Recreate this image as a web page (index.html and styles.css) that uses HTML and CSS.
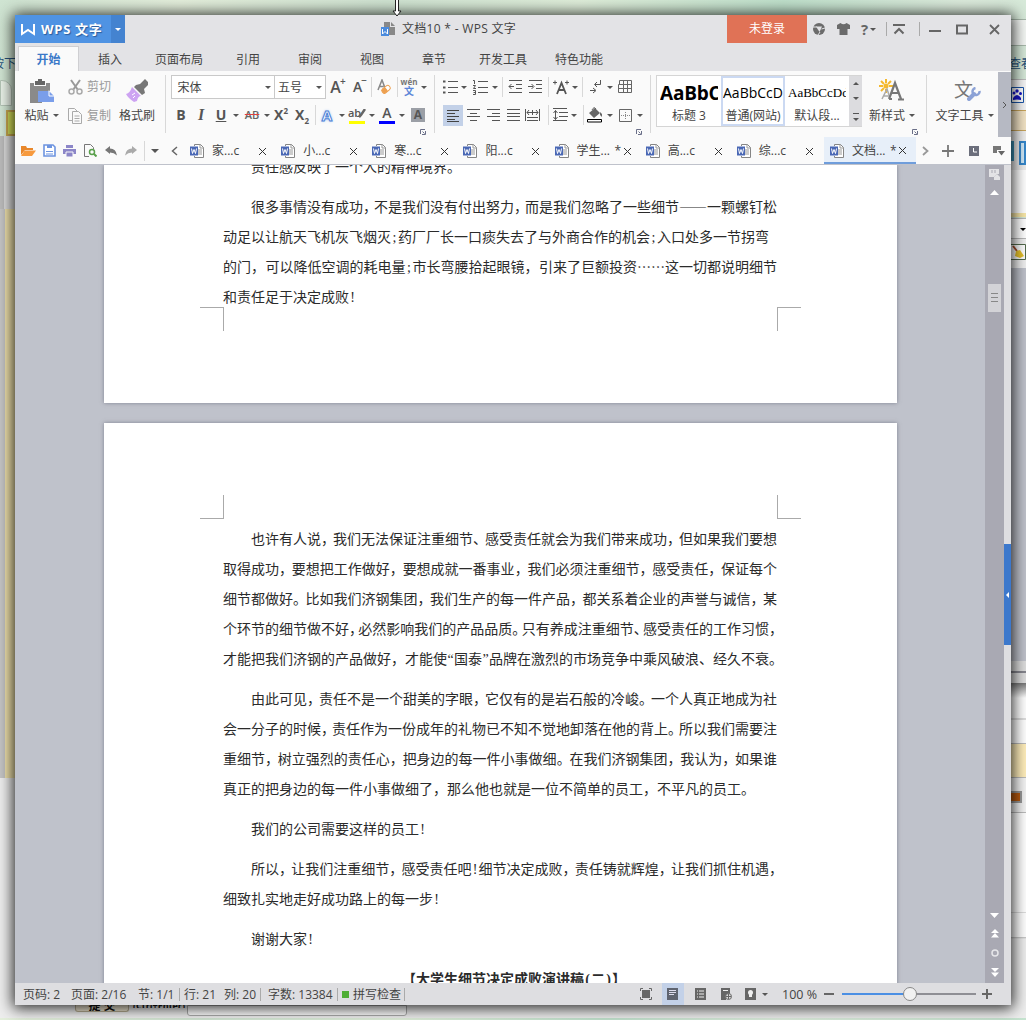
FILE: index.html
```html
<!DOCTYPE html>
<html lang="zh-CN">
<head>
    <meta charset="UTF-8">
    <title>文档10 * - WPS 文字</title>
    <link rel="stylesheet" href="styles.css">
</head>
<body>
    <svg class="symbols">
        <symbol id="doc" viewBox="0 0 16 16">
            <path d="M5.5 3V1.500h6l3 3v10h-9V13" fill="#fff" stroke="#858585"/>
            <path d="M11 1v4h4M9 7h4M9 9h4M9 11h4" fill="none" stroke="#999"/>
            <path d="M1 3.500h8v9H1z" fill="#4a68b5"/>
            <path d="M2.500 5.500l1 5 1.500-4 1.500 4 1-5" fill="none" stroke="#fff"/>
        </symbol>
        <symbol id="close" viewBox="0 0 9 9"><path d="M1 1l7 7M8 1L1 8" stroke="#333" fill="none"/></symbol>
        <symbol id="launch" viewBox="0 0 6 6"><path d="M.5 5V.5H5M5.500 2v3.500H2M2.500 2.500l2 2" stroke="#6a6f88" fill="none"/></symbol>
    </svg>

    <!-- windows behind -->
    <div class="desktop">
        <div class="strip left">
            <div class="l-top"></div>
            <div class="l-label">按下</div>
            <div class="l-tab"></div>
            <div class="l-icon"></div>
            <div class="l-list"></div>
            <div class="l-yellow"></div>
            <div class="l-end"></div>
        </div>
        <div class="strip right">
            <div class="r-top"></div>
            <div class="r-bar"></div>
            <div class="r-label">查看</div>
            <div class="r-paw">
                <svg width="13" height="16" viewBox="0 0 13 16"><path d="M.5.5h12v15H.5z" fill="#fff" stroke="#1a55a8"/><path d="M2 11q4-6 8 0v2q-4-1-8 0z" fill="#1515c8"/><circle cx="3" cy="6" r="1.500" fill="#1515c8"/><circle cx="6" cy="4" r="1.700" fill="#1515c8"/><circle cx="9.500" cy="6.500" r="1.500" fill="#1515c8"/></svg>
            </div>
            <div class="r-beige"></div>
            <div class="r-pics"><i class="r-lock"></i><i class="r-pic"></i></div>
            <div class="r-white"></div>
            <div class="r-combo"><i class="caret black"></i></div>
            <div class="r-broom">
                <svg width="15" height="16" viewBox="0 0 15 16"><path d="M0 .5h14.500v15H0" fill="#fff" stroke="#536b4c"/><path d="M2 2l4 5" stroke="#a64a28" stroke-width="2"/><path d="M5 7l4-1 4 6-4 2-5-2z" fill="#e8c32c"/></svg>
            </div>
            <div class="r-gray"></div>
            <div class="r-status"></div>
            <div class="r-row1"></div>
            <div class="r-yellow"></div>
            <div class="r-photo"><i></i></div>
            <div class="r-rest"></div>
        </div>
        <div class="under">
            <span class="submit">提 交</span><span class="under-text">(Ctrl+Enter)</span><span class="under-field"></span>
        </div>
    </div>

    <svg class="cursor" width="10" height="17" viewBox="0 0 10 17"><path d="M3.500-1v12H1L5 16l4-5H6.500V-1z" fill="#fff" stroke="#222"/></svg>

    <div class="window">
        <div class="titlebar">
            <div class="brand">
                <svg width="15" height="13" viewBox="0 0 15 13"><path d="M1 1v10l6-4 6 4V1" fill="none" stroke="#fff" stroke-width="2"/></svg>
                <span>WPS 文字</span>
            </div>
            <div class="brand-menu"><i class="caret white"></i></div>
            <div class="title">
                <svg width="15" height="15" viewBox="0 0 15 15"><path d="M3 0h6v5h5v8H3z" fill="#888"/><path d="M10 0l4 4h-4z" fill="#888"/><path d="M0 5h8v9H0z" fill="#4a8bdd"/><path d="M1.500 7v5L4 9.500 6.500 12V7" fill="none" stroke="#fff"/></svg>
                <span>文档10 * - WPS 文字</span>
            </div>
            <div class="login">未登录</div>
            <div class="controls">
                <svg width="12" height="12" viewBox="0 0 12 12"><circle cx="6" cy="6" r="6" fill="#6b6b6b"/><path d="M3 3.500h6L6.500 9z" fill="#e3e3e6"/><path d="M0 4l4 0M12 5L8.500 6M5 12l2-3" stroke="#e3e3e6"/></svg>
                <svg width="13" height="12" viewBox="0 0 13 12"><path d="M3.500 0q3 2.500 6 0L13 2v4h-2.500v6h-8V6H0V2z" fill="#6b6b6b"/></svg>
                <span class="help">?<i class="caret"></i></span>
                <i class="bar"></i>
                <svg width="12" height="11" viewBox="0 0 12 11"><path d="M0 1h12M1.500 9.500L6 5l4.500 4.500" fill="none" stroke="#666" stroke-width="2"/></svg>
                <i class="bar"></i>
                <svg width="12" height="11" viewBox="0 0 12 11"><path d="M0 7h12" stroke="#666" stroke-width="2"/></svg>
                <svg width="12" height="11" viewBox="0 0 12 11"><path d="M1 1.500h10v8H1z" fill="none" stroke="#666" stroke-width="2"/></svg>
                <svg width="11" height="11" viewBox="0 0 11 11"><path d="M1 1l9 9M10 1l-9 9" stroke="#666" stroke-width="1.800"/></svg>
            </div>
        </div>

        <div class="menu">
            <span class="active">开始</span><span>插入</span><span class="wide">页面布局</span><span>引用</span><span>审阅</span><span>视图</span><span>章节</span><span class="wide">开发工具</span><span class="wide">特色功能</span>
        </div>

        <div class="ribbon">
            <div class="group clipboard">
                <div class="big">
                    <svg width="26" height="26" viewBox="0 0 26 26"><path d="M1 4h4v4h12V4h4v7h-8v13H1z" fill="#8a8a8a"/><path d="M1 7h20v5H1z" fill="#8a8a8a"/><path d="M6 2h3V0h4v2h3v4H6z" fill="#666"/><path d="M9 12h11l5 5v6H9z" fill="#7a9eea"/><path d="M20 11.500v5.500h5" fill="none" stroke="#fff"/></svg>
                    <span>粘贴<i class="caret"></i></span>
                </div>
                <div class="stack">
                    <div><svg width="15" height="17" viewBox="0 0 15 17"><path d="M3 1l7 10M12 1L5 11" stroke="#999" stroke-width="2"/><circle cx="3.500" cy="12.500" r="2.500" fill="none" stroke="#aaa" stroke-width="1.500"/><circle cx="11.500" cy="12.500" r="2.500" fill="none" stroke="#aaa" stroke-width="1.500"/></svg>剪切</div>
                    <div><svg width="15" height="16" viewBox="0 0 15 16"><path d="M4 12.500H.5V.5h6L9 3" fill="none" stroke="#aaa"/><path d="M4.500 3.500h6l3 3v9h-9zM6.500 8h5M6.500 10.500h5M6.500 13h5" fill="none" stroke="#aaa"/></svg>复制</div>
                </div>
                <div class="big brush">
                    <svg width="24" height="24" viewBox="0 0 24 24"><path d="M11 6l4-1 5-5 3 3v3l-4 4 1 4-3 2-8-8z" fill="#777"/><path d="M7 8l9 9q-3 0-4 5l-3 1q-6-4-8-8 4-1 6-7z" fill="#cda3f2"/><path d="M7 16l3-2M8 19l2-2" stroke="#fff"/></svg>
                    <span>格式刷</span>
                </div>
            </div>

            <div class="group font">
                <div class="row font-top">
                    <div class="combo">宋体<i class="caret"></i></div>
                    <div class="combo size">五号<i class="caret"></i></div>
                    <span class="letter">A<sup>+</sup></span>
                    <span class="letter small">A<sup>−</sup></span>
                    <i class="sep"></i>
                    <svg width="15" height="16" viewBox="0 0 15 16"><path d="M1 11L5 1l3 8M2.500 7.500h4" fill="none" stroke="#888" stroke-width="1.500"/><rect x="5" y="8" width="9" height="5" rx="2" fill="#fff" stroke="#eda050" transform="rotate(-40 9 11)"/><rect x="5" y="8" width="5" height="5" rx="1" fill="#eda050" transform="rotate(-40 9 11)"/></svg>
                    <i class="sep"></i>
                    <span class="wen"><b>wén</b><em>文</em></span>
                    <i class="caret"></i>
                </div>
                <div class="row font-bottom">
                    <b class="fmt">B</b>
                    <i class="fmt serif">I</i>
                    <u class="fmt">U</u>
                    <i class="caret"></i>
                    <span class="strike">AB</span>
                    <i class="caret"></i>
                    <span class="fmt sc">X<sup>2</sup></span>
                    <span class="fmt sc">X<sub>2</sub></span>
                    <i class="sep"></i>
                    <span class="glow">A</span>
                    <i class="caret"></i>
                    <span class="mark yellow">ab<svg width="8" height="9" viewBox="0 0 8 9"><path d="M7 0L3 6 1 8" stroke="#666" stroke-width="2.500"/></svg></span>
                    <i class="caret"></i>
                    <span class="mark blue">A</span>
                    <i class="caret"></i>
                    <span class="shade">A</span>
                </div>
                <svg class="launcher"><use href="#launch"/></svg>
            </div>

            <div class="group para">
                <div class="row para-top">
                    <svg width="15" height="14" viewBox="0 0 15 14"><path d="M5 1.500h10M5 7.500h10M5 12.500h10" stroke="#555"/><path d="M0 1.500h2.500M0 7.500h2.500M0 12.500h2.500" stroke="#555" stroke-width="2"/></svg>
                    <i class="caret"></i>
                    <svg width="15" height="16" viewBox="0 0 15 16"><path d="M5 2.500h10M5 8.500h10M5 13.500h10" stroke="#555"/><path d="M0 1.500h1.500V5M0 6.500h2.500L.5 9.500H3M0 11.500h2.500v4H0M.5 13.500h2" stroke="#555" fill="none"/></svg>
                    <i class="caret"></i>
                    <i class="sep"></i>
                    <svg width="14" height="14" viewBox="0 0 14 14"><path d="M1 .5h13M8 4.500h6M8 8.500h6M1 12.500h13M1 6.500h5M3.500 4L1 6.500 3.500 9" stroke="#555" fill="none"/></svg>
                    <svg width="14" height="14" viewBox="0 0 14 14"><path d="M1 .5h13M8 4.500h6M8 8.500h6M1 12.500h13M0 6.500h5M3.500 4L6 6.500 3.500 9" stroke="#555" fill="none"/></svg>
                    <i class="sep"></i>
                    <svg width="17" height="15" viewBox="0 0 17 15"><path d="M4 14L8.500 3 13 14M5.500 10h6" stroke="#555" stroke-width="1.800" fill="none"/><path d="M0 2.500h4M2 .5v4M12 2.500h4M14 .5v4" stroke="#555"/></svg>
                    <i class="caret"></i>
                    <i class="sep"></i>
                    <svg width="12" height="14" viewBox="0 0 12 14"><path d="M10.500 0v4.500H5M7 2L4.500 4.500 7 7M0 10.500h5M3 8l3 2.500L3 13" stroke="#555" fill="none"/></svg>
                    <i class="caret"></i>
                    <svg width="14" height="14" viewBox="0 0 14 14"><path d="M1.500 4.500V.5h12v12h-13v-8h13M.5 8.500h13M5.500.5v12M9.500.5v12" stroke="#666" fill="none"/></svg>
                </div>
                <div class="row para-bottom">
                    <span class="on"><svg width="13" height="12" viewBox="0 0 13 12"><path d="M0 .5h12M0 3.500h8M0 6.500h12M0 9.500h8M0 11.500h12" stroke="#444"/></svg></span>
                    <svg width="13" height="12" viewBox="0 0 13 12"><path d="M0 .5h13M3 4.500h7M0 7.500h13M3 11.500h7" stroke="#555"/></svg>
                    <svg width="13" height="12" viewBox="0 0 13 12"><path d="M0 .5h13M5 4.500h8M0 7.500h13M5 11.500h8" stroke="#555"/></svg>
                    <svg width="13" height="12" viewBox="0 0 13 12"><path d="M0 .5h13M0 4.500h13M0 7.500h13M0 11.500h13" stroke="#555"/></svg>
                    <svg width="15" height="13" viewBox="0 0 15 13"><path d="M.5 0v12M14.500 0v12M2 3.500h11M4 1L2 3.500 4 6M11 1l2 2.500L11 6M2 8.500h11M2 11.500h11M7.500 1v5" stroke="#555" fill="none"/></svg>
                    <i class="sep"></i>
                    <svg width="15" height="14" viewBox="0 0 15 14"><path d="M0 .5h14M6 4.500h9M6 8.500h9M0 12.500h14M2.500 2.500v9M.5 5l2-2.500L4.500 5M.5 9l2 2.500 2-2.500" stroke="#555" fill="none"/></svg>
                    <i class="caret"></i>
                    <i class="sep"></i>
                    <svg width="16" height="16" viewBox="0 0 16 16"><path d="M8 1l5 5-6 5-5-5zM13 5l2 2v3l-2-2z" fill="#666"/><path d="M5 3q2-4 4-1" stroke="#666" fill="none"/><path d="M.5 12.500h14v2.500H.5z" fill="#fff" stroke="#000"/></svg>
                    <i class="caret"></i>
                    <svg width="13" height="13" viewBox="0 0 13 13"><path d="M.5.5h12v12H.5z" stroke="#666" fill="none"/><path d="M6.500 3v8M2 6.500h9" stroke="#888" stroke-dasharray="1 1"/></svg>
                    <i class="caret"></i>
                </div>
                <svg class="launcher"><use href="#launch"/></svg>
            </div>

            <div class="group styles">
                <div class="gallery">
                    <div class="style"><b class="h3">AaBbC</b><span>标题 3</span></div>
                    <div class="style selected"><b class="normal">AaBbCcD</b><span>普通(网站)</span></div>
                    <div class="style"><b class="default">AaBbCcDd</b><span>默认段...</span></div>
                    <div class="scroller"><i class="caret up"></i><i class="caret"></i><i class="more"><i class="caret"></i></i></div>
                </div>
                <div class="big newstyle">
                    <svg width="26" height="23" viewBox="0 0 26 23"><path d="M7 0v4M7 10v4M0 7h4M10 7h4M2 2l3 3M12 2L9 5M2 12l3-3" stroke="#f5b92e" stroke-width="2"/><circle cx="7" cy="7" r="2.500" fill="#f5b92e"/><path d="M10 20L16 4l6 16M12 14h8M13 20h-3M19 20.500h6" stroke="#777" stroke-width="2.200" fill="none"/><path d="M3 20L8 10l2 6M5 17h5" stroke="#aaa" stroke-width="1.500" fill="none"/></svg>
                    <span>新样式<i class="caret"></i></span>
                </div>
                <svg class="launcher"><use href="#launch"/></svg>
            </div>

            <div class="group tools">
                <div class="big">
                    <span class="tool-icon">文<svg width="14" height="14" viewBox="0 0 14 14"><path d="M2 12l5-5" stroke="#8ca2d6" stroke-width="4" stroke-linecap="round"/><path d="M12.500 4a3.500 3.500 0 1 1-4-3" fill="none" stroke="#8ca2d6" stroke-width="2.500"/></svg></span>
                    <span>文字工具<i class="caret"></i></span>
                </div>
            </div>
            <div class="more-groups"><svg width="5" height="8" viewBox="0 0 5 8"><path d="M1 1l3 3-3 3" fill="none" stroke="#555"/></svg></div>
        </div>

        <div class="docbar">
            <div class="quick">
                <svg width="15" height="12" viewBox="0 0 15 12"><path d="M0 10V1h5l1 2h6v2H4z" fill="#e8872b"/><path d="M3.500 5.500H15L11 11H0z" fill="#f79a3e"/></svg>
                <svg width="13" height="13" viewBox="0 0 13 13"><path d="M1 1h9l2 2v9H1z" fill="#fff" stroke="#6d94e0" stroke-width="1.600"/><path d="M4 1h5v3H4z" fill="#6d94e0"/><path d="M3 7.500h7M3 10h7" stroke="#6d94e0"/></svg>
                <svg width="13" height="12" viewBox="0 0 13 12"><path d="M3 0h7v3H3zM0 4h13v5H0z" fill="#8c86c8"/><path d="M3 7h7v5H3z" fill="#8c86c8" stroke="#fafafa"/></svg>
                <svg width="13" height="13" viewBox="0 0 13 13"><path d="M5 12.500H.5V.5h6l3 3V5" fill="none" stroke="#777"/><circle cx="8" cy="8" r="2.500" fill="none" stroke="#5aa04c" stroke-width="1.500"/><path d="M10 10l2.500 2.500" stroke="#5aa04c" stroke-width="2"/></svg>
                <svg width="13" height="10" viewBox="0 0 13 10"><path d="M0 4l5-4v2.500q6 0 7 7-3-3-7-3V8z" fill="#777"/></svg>
                <svg width="13" height="10" viewBox="0 0 13 10"><path d="M12 4L7 0v2.500q-6 0-7 7 3-3 7-3V8z" fill="#aaa"/></svg>
                <i class="sep"></i>
                <i class="caret big-caret"></i>
                <svg width="7" height="10" viewBox="0 0 7 10"><path d="M6 1L1.500 5 6 9" fill="none" stroke="#666" stroke-width="1.500"/></svg>
            </div>
            <div class="doctabs">
                <div class="doctab"><svg><use href="#doc"/></svg><span>家...c</span><em></em><svg class="x"><use href="#close"/></svg></div>
                <div class="doctab"><svg><use href="#doc"/></svg><span>小...c</span><em></em><svg class="x"><use href="#close"/></svg></div>
                <div class="doctab"><svg><use href="#doc"/></svg><span>寒...c</span><em></em><svg class="x"><use href="#close"/></svg></div>
                <div class="doctab"><svg><use href="#doc"/></svg><span>阳...c</span><em></em><svg class="x"><use href="#close"/></svg></div>
                <div class="doctab"><svg><use href="#doc"/></svg><span>学生...</span><em>*</em><svg class="x"><use href="#close"/></svg></div>
                <div class="doctab"><svg><use href="#doc"/></svg><span>高...c</span><em></em><svg class="x"><use href="#close"/></svg></div>
                <div class="doctab"><svg><use href="#doc"/></svg><span>综...c</span><em></em><svg class="x"><use href="#close"/></svg></div>
                <div class="doctab current"><svg><use href="#doc"/></svg><span>文档...</span><em>*</em><svg class="x"><use href="#close"/></svg></div>
            </div>
            <div class="tabtools">
                <svg width="7" height="10" viewBox="0 0 7 10"><path d="M1 1l4.500 4L1 9" fill="none" stroke="#999" stroke-width="1.800"/></svg>
                <svg width="12" height="12" viewBox="0 0 12 12"><path d="M0 6h12M6 0v12" stroke="#777" stroke-width="1.800"/></svg>
                <svg width="10" height="10" viewBox="0 0 10 10"><path d="M0 0h10v10H0z" fill="#6c6f7c"/><path d="M4.500 2v4H8" fill="none" stroke="#fff"/></svg>
                <svg width="12" height="10" viewBox="0 0 12 10"><path d="M0 0h8v4H4v3H0z" fill="#777"/><path d="M5 5h7L8.500 9.500z" fill="#666"/></svg>
            </div>
        </div>

        <div class="workspace">
            <div class="canvas">
                <div class="page first">
                    <div class="text" id="pageOne"></div>
                    <i class="crop bl"></i><i class="crop br"></i>
                </div>
                <div class="page second">
                    <div class="text" id="pageTwo"></div>
                    <i class="crop tl"></i><i class="crop tr"></i>
                </div>
            </div>
            <div class="scrollbar">
                <svg width="11" height="11" viewBox="0 0 11 11"><path d="M0 0h10v5H8L5 8H0z" fill="#e3e3e6"/><path d="M3 1v3M6 1v3" stroke="#a9a9b3"/><path d="M5 8l3-3 3 3v3H5z" fill="#e3e3e6"/></svg>
                <svg class="to-top" width="9" height="5" viewBox="0 0 9 5"><path d="M4.500 0L9 5H0z" fill="#fff"/></svg>
                <div class="thumb"></div>
                <div class="jump">
                    <svg width="9" height="5" viewBox="0 0 9 5"><path d="M0 0h9L4.500 5z" fill="#fff"/></svg>
                    <svg width="8" height="9" viewBox="0 0 8 9"><path d="M4 0l4 4H0zM4 4l4 4.500H0z" fill="#fff"/></svg>
                    <svg width="8" height="8" viewBox="0 0 8 8"><circle cx="4" cy="4" r="3" fill="none" stroke="#e6e6e9" stroke-width="1.500"/></svg>
                    <svg width="8" height="9" viewBox="0 0 8 9"><path d="M0 0h8L4 4zM0 4.500h8L4 9z" fill="#fff"/></svg>
                </div>
            </div>
            <div class="edge"><div class="handle"><svg width="3" height="6" viewBox="0 0 3 6"><path d="M3 0v6L0 3z" fill="#fff"/></svg></div></div>
        </div>

        <div class="status">
            <span class="s-code">页码: 2</span>
            <span class="s-page">页面: 2/16</span>
            <span class="s-sec">节: 1/1</span>
            <span class="s-row">行: 21</span>
            <span class="s-col">列: 20</span>
            <span class="s-count">字数: 13384</span>
            <span class="s-spell"><i></i>拼写检查</span>
            <div class="views">
                <svg width="12" height="12" viewBox="0 0 12 12"><path d="M.5 3V.5H3M9 .5h2.500V3M11.500 9v2.500H9M3 11.500H.5V9" fill="none" stroke="#666"/><path d="M2 2h8v8H2z" fill="#666"/></svg>
                <span class="view-on"><svg width="11" height="12" viewBox="0 0 11 12"><path d="M0 0h11v12H0z" fill="#5f6470"/><path d="M2 2.500h7M2 4.500h7M2 6.500h5" stroke="#dde"/></svg></span>
                <svg width="11" height="12" viewBox="0 0 11 12"><path d="M0 0h11v12H0z" fill="#666"/><path d="M2 3h1M4 3h5M2 6h1M4 6h5M2 9h1M4 9h5" stroke="#eee"/></svg>
                <svg width="11" height="12" viewBox="0 0 11 12"><path d="M0 0h9v6H5v6H0z" fill="#666"/><path d="M2 2.500h5" stroke="#eee"/><circle cx="7.500" cy="8.500" r="3" fill="#ddd" stroke="#666"/><path d="M7.500 6v5M5 8.500h5" stroke="#666"/></svg>
                <svg width="11" height="12" viewBox="0 0 11 12"><path d="M0 0h11v12H0z" fill="#666"/><circle cx="5.500" cy="4.500" r="2.500" fill="#eee"/><path d="M4 6h3v3H4z" fill="#eee"/></svg>
                <i class="caret"></i>
            </div>
            <span class="percent">100 %</span>
            <div class="zoom"><i class="minus"></i><div class="track"><i class="done"></i><i class="knob"></i></div><i class="plus"></i></div>
        </div>
    </div>

    <script>
        // f: stretch the line to the right margin, i: first line indent
        const pageOne = [
            { i: 1, t: '责任感反映了一个人的精神境界。' },
            { i: 1, f: 1, t: '很多事情没有成功,不是我们没有付出努力,而是我们忽略了一些细节——一颗螺钉松' },
            { t: '动足以让航天飞机灰飞烟灭;药厂厂长一口痰失去了与外商合作的机会;入口处多一节拐弯' },
            { f: 1, t: '的门,可以降低空调的耗电量;市长弯腰拾起眼镜,引来了巨额投资……这一切都说明细节' },
            { t: '和责任足于决定成败!' }
        ];
        const pageTwo = [
            { i: 1, f: 1, t: '也许有人说,我们无法保证注重细节、感受责任就会为我们带来成功,但如果我们要想' },
            { f: 1, t: '取得成功,要想把工作做好,要想成就一番事业,我们必须注重细节,感受责任,保证每个' },
            { f: 1, t: '细节都做好。比如我们济钢集团,我们生产的每一件产品,都关系着企业的声誉与诚信,某' },
            { f: 1, t: '个环节的细节做不好,必然影响我们的产品品质。只有养成注重细节、感受责任的工作习惯,' },
            { f: 1, t: '才能把我们济钢的产品做好,才能使“国泰”品牌在激烈的市场竞争中乘风破浪、经久不衰。' },
            { i: 1, f: 1, t: '由此可见,责任不是一个甜美的字眼,它仅有的是岩石般的冷峻。一个人真正地成为社' },
            { f: 1, t: '会一分子的时候,责任作为一份成年的礼物已不知不觉地卸落在他的背上。所以我们需要注' },
            { f: 1, t: '重细节,树立强烈的责任心,把身边的每一件小事做细。在我们济钢集团,我认为,如果谁' },
            { t: '真正的把身边的每一件小事做细了,那么他也就是一位不简单的员工,不平凡的员工。' },
            { i: 1, t: '我们的公司需要这样的员工!' },
            { i: 1, f: 1, t: '所以,让我们注重细节,感受责任吧!细节决定成败,责任铸就辉煌,让我们抓住机遇,' },
            { t: '细致扎实地走好成功路上的每一步!' },
            { i: 1, t: '谢谢大家!' },
            { h: 1, t: '【大学生细节决定成败演讲稿(二)】' }
        ];

        function renderLines(id, lines) {
            const box = document.getElementById(id);
            lines.forEach(line => {
                const row = document.createElement('div');
                row.className = 'line' + (line.i ? ' indent' : '') + (line.h ? ' heading' : '');
                const inner = document.createElement('span');
                inner.innerHTML = line.t
                    .replace(/[;!“”()]/g, '<span class="half">$&</span>')
                    .replace(/[,\uff0c。、]/g, m => '<span class="punct">' + (m === ',' ? '\uff0c' : m) + '</span>');
                row.appendChild(inner);
                box.appendChild(row);
                if (line.f) {
                    const hang = /[,\uff0c。]$/.test(line.t);
                    const target = (hang ? 560 : 554) - (line.i ? 28 : 0);
                    const marks = [...inner.querySelectorAll('.punct')];
                    if (hang) marks.pop();
                    const extra = (target - inner.getBoundingClientRect().width) / marks.length;
                    marks.forEach(m => m.style.marginRight = extra + 'px');
                }
            });
        }

        renderLines('pageOne', pageOne);
        renderLines('pageTwo', pageTwo);
    </script>
</body>
</html>
```
FILE: styles.css
```css
* {
    box-sizing: border-box;
}
body {
    margin: 0;
    width: 1026px;
    height: 1020px;
    overflow: hidden;
    position: relative;
    font-family: "Open Sans", "Noto Sans CJK SC", sans-serif;
    font-size: 12px;
    line-height: 16px;
    color: #444;
}
svg {
    display: block;
    flex: none;
}
i, em {
    font-style: normal;
}
.symbols {
    position: absolute;
    width: 0;
    height: 0;
}

/* background windows */
.desktop {
    height: 1020px;
    display: grid;
    grid-template-columns: 18px 1fr 15px;
    grid-template-rows: 1005px 15px;
    background: linear-gradient(100deg, #cfe4d2 0%, #e4efdc 15%, #cfe3d1 32%, #dfeeda 48%, #bfe0cb 65%, #dcebdc 80%, #c5e3cf 100%);
}
.strip {
    display: flex;
    flex-direction: column;
    overflow: hidden;
    white-space: nowrap;
    color: #28527c;
}
.strip div {
    flex: none;
}
.strip.right {
    grid-column: 3;
}
.l-top {
    height: 56px;
}
.l-label {
    height: 24px;
    margin-left: -8px;
}
.l-tab {
    height: 26px;
    background: #e9f2e8;
    border: 1px solid #b4c4b6;
    border-radius: 0 10px 0 0;
    margin-right: 6px;
}
.l-icon {
    height: 26px;
    margin: 4px 0 0 6px;
    background: #d8e25a;
    border: 2px solid #c9a850;
}
.l-list {
    height: 73px;
    background: #ddd;
    border-left: 4px solid #bbb;
}
.l-yellow {
    height: 569px;
    background: #f2e4ae;
    border-left: 5px solid #c4c4c4;
}
.l-end {
    height: 240px;
    background: #eee;
}
.r-top {
    height: 20px;
    border-bottom: 1px solid #a7b8aa;
}
.r-bar {
    height: 26px;
    background: #f4f7f4;
    border-bottom: 1px solid #a7b8aa;
}
.r-label {
    height: 34px;
    padding-top: 10px;
    margin-left: -2px;
    background: #d5e8d8;
    border-bottom: 1px solid #bbb;
}
.r-paw {
    height: 30px;
    padding-top: 7px;
    background: #f6f6f6;
}
.r-beige {
    height: 21px;
    background: #f2e3c5;
    border: solid #c9a55c;
    border-width: 1px 0;
}
.r-pics {
    height: 39px;
    padding-top: 10px;
    display: flex;
    gap: 5px;
    background: #eee;
}
.r-lock {
    width: 5px;
    height: 20px;
    background: #3c93b8;
}
.r-pic {
    width: 8px;
    height: 24px;
    background: #cfe9f8;
    border: 2px solid #3688cc;
}
.r-white {
    height: 47px;
    background: #fff;
    border-bottom: 4px solid #f8e7a8;
}
.r-combo {
    height: 21px;
    margin-top: 1px;
    padding: 9px 0 0 9px;
    background: #fff;
    border: solid #b9b9b9;
    border-width: 1px 0;
}
.r-broom {
    height: 29px;
    padding-top: 5px;
    background: #f0f0f0;
}
.r-gray {
    height: 393px;
    background: #bfc2cb;
}
.r-status {
    height: 22px;
    background: linear-gradient(#ddd 10px, #86868e 10px, #86868e 12px, #ddd 12px);
}
.r-row1 {
    height: 61px;
    background: linear-gradient(#777, #eee 13px, #fff 15px, #fff 35px, #bbb 36px, #fff 37px);
    border-bottom: 1px solid #bbb;
}
.r-yellow {
    height: 33px;
    background: #ffeebb;
}
.r-photo {
    height: 36px;
    padding-top: 13px;
    background: #f4f4f4;
    border: solid #bbb;
    border-width: 1px 0;
}
.r-photo i {
    display: block;
    width: 11px;
    height: 12px;
    background: #b85a10;
    border: 2px solid #999;
    border-left: 0;
}
.r-rest {
    height: 200px;
    background: linear-gradient(#fff 99px, #bbb 99px, #fff 100px, #fff 124px, #bbb 124px, #eee 126px);
}
.under {
    grid-column: 1 / 4;
    height: 13px;
    padding-left: 75px;
    display: flex;
    overflow: hidden;
    background: #eee;
    color: #111;
    font-weight: bold;
}
.submit {
    width: 54px;
    height: 7px;
    overflow: hidden;
    line-height: 1px;
    text-align: center;
    background: #f0e8d2;
    border: 1px solid #b7ad93;
    border-top: 0;
    border-radius: 0 0 3px 3px;
}
.under-text {
    width: 58px;
    height: 3px;
    overflow: hidden;
    line-height: 1px;
    padding-left: 4px;
    font-size: 9px;
}
.under-field {
    width: 220px;
    height: 11px;
    background: #fff;
    border: 1px solid #aaa;
    border-radius: 0 0 3px 3px;
}
.cursor {
    position: absolute;
    left: 392px;
    top: 0;
    z-index: 3;
}

/* main window */
.window {
    position: absolute;
    left: 15px;
    top: 15px;
    width: 996px;
    height: 990px;
    display: flex;
    flex-direction: column;
    background: #fafafa;
    box-shadow: 0 1px 14px 2px rgba(0, 0, 0, 0.85);
}
.caret {
    display: inline-block;
    flex: none;
    width: 0;
    height: 0;
    border: solid transparent;
    border-width: 3px 3px 0;
    border-top-color: #555;
}
.caret.white {
    border-top-color: #fff;
}
.caret.black {
    border-top-color: #000;
    display: block;
}
.caret.up {
    border-width: 0 3px 3px;
    border-bottom-color: #555;
}
.caret.big-caret {
    border-width: 4px 4px 0;
}
.sep, .bar {
    display: block;
    width: 1px;
    height: 20px;
    background: #d8d8d8;
}

.titlebar {
    height: 28px;
    display: flex;
    align-items: center;
    background: #e3e3e6;
}
.brand {
    width: 96px;
    height: 28px;
    padding-left: 6px;
    display: flex;
    align-items: center;
    gap: 5px;
    background: #4f93e3;
    color: #fff;
    font-size: 13px;
    font-weight: bold;
    letter-spacing: 0.7px;
    white-space: nowrap;
    text-shadow: 1px 1px 1px #2a5c9c;
}
.brand-menu {
    width: 14px;
    height: 28px;
    display: flex;
    align-items: center;
    justify-content: center;
    background: #4483d0;
}
.title {
    flex: 1;
    padding-left: 256px;
    display: flex;
    align-items: center;
    gap: 6px;
    letter-spacing: 0.3px;
    white-space: nowrap;
}
.login {
    width: 80px;
    height: 28px;
    line-height: 28px;
    text-align: center;
    background: #e07256;
    color: #fff;
}
.controls {
    width: 204px;
    padding-left: 6px;
    display: grid;
    grid-template-columns: 12px 36px 15px 14px 18px 16px 22px 32px 32px;
    align-items: center;
    justify-items: center;
}
.help {
    display: flex;
    align-items: center;
    gap: 2px;
    font-size: 15px;
    font-weight: bold;
    color: #666;
}
.bar {
    height: 14px;
    background: #aaa;
    margin-left: 6px;
}

.menu {
    height: 28px;
    padding-left: 3px;
    display: flex;
    background: #e3e3e6;
}
.menu span {
    width: 62px;
    height: 25px;
    margin-top: 3px;
    line-height: 28px;
    text-align: center;
}
.menu .wide {
    width: 76px;
}
.menu .active {
    background: #fafafa;
    border: 1px solid #cfcfd2;
    border-bottom: 0;
    color: #3a78c8;
    font-weight: bold;
    line-height: 26px;
    width: 61px;
}

.ribbon {
    height: 66px;
    display: flex;
    background: #fafafa;
}
.group {
    position: relative;
    height: 58px;
    margin-top: 4px;
    border-right: 1px solid #d8d8d8;
    flex: none;
}
.launcher {
    position: absolute;
    right: 8px;
    bottom: -2px;
    width: 6px;
    height: 6px;
}
.clipboard {
    width: 151px;
    display: flex;
    color: #444;
}
.big {
    display: flex;
    flex-direction: column;
    align-items: center;
    justify-content: space-between;
    height: 49px;
    padding-top: 4px;
    white-space: nowrap;
}
.big > span:last-child {
    display: flex;
    align-items: center;
    gap: 4px;
    height: 17px;
}
.clipboard .big {
    width: 53px;
}
.clipboard .big.brush {
    width: 46px;
}
.stack {
    width: 46px;
    display: flex;
    flex-direction: column;
    color: #999;
}
.stack div {
    height: 28px;
    display: flex;
    align-items: center;
    gap: 4px;
    padding-bottom: 4px;
    white-space: nowrap;
}
.stack div + div {
    padding-bottom: 2px;
}
.font {
    width: 269px;
    padding-left: 5px;
}
.row {
    display: grid;
    align-items: center;
    justify-items: center;
    height: 24px;
    white-space: nowrap;
}
.row + .row {
    margin-top: 4px;
}
.font-top {
    grid-template-columns: 103px 52px 24px 20px 3px 23px 2px 22px 8px;
}
.font-bottom {
    grid-template-columns: 20px 20px 20px 10px 22px 8px 20px 22px 4px 20px 10px 20px 10px 20px 10px 22px;
}
.combo {
    width: 104px;
    height: 24px;
    padding: 1px 3px 0 6px;
    display: flex;
    align-items: center;
    justify-content: space-between;
    background: #fff;
    border: 1px solid #c9c9c9;
}
.combo.size {
    width: 52px;
    padding-left: 3px;
}
.letter {
    font-size: 16px;
    font-weight: 600;
    color: #555;
    line-height: 20px;
}
.letter.small {
    font-size: 14px;
}
.letter sup {
    font-size: 10px;
    line-height: 0;
    vertical-align: 8px;
    margin-left: -1px;
}
.wen {
    display: flex;
    flex-direction: column;
    align-items: center;
    font-size: 8px;
    line-height: 8px;
    color: #777;
}
.wen em {
    font-size: 10px;
    line-height: 11px;
    color: #5b86d8;
    font-weight: bold;
}
.fmt {
    font-size: 14px;
    font-weight: bold;
    color: #555;
    line-height: 18px;
}
.fmt.serif {
    font-family: "Liberation Serif", serif;
    font-size: 16px;
    font-style: italic;
}
.sc {
    font-size: 14px;
}
.sc sup, .sc sub {
    font-size: 8px;
    line-height: 0;
}
.strike {
    font-size: 11px;
    font-weight: 600;
    color: #666;
    text-decoration: line-through #e04040;
}
.glow {
    font-size: 15px;
    font-weight: bold;
    color: #fff;
    -webkit-text-stroke: 1px #4a7fd6;
    text-shadow: 0 0 3px #7aa8f0;
}
.mark {
    width: 16px;
    height: 18px;
    display: flex;
    justify-content: center;
    font-size: 14px;
    font-weight: 600;
    line-height: 14px;
    color: #555;
    border-bottom: 3px solid #ff0;
}
.mark.yellow {
    font-size: 11px;
}
.mark.yellow svg {
    margin: 3px 0 0 -3px;
}
.mark.blue {
    border-bottom-color: #00f;
}
.shade {
    width: 14px;
    height: 14px;
    line-height: 14px;
    text-align: center;
    font-weight: bold;
    background: #9b9fa6;
    color: #555;
}
.para {
    width: 216px;
    padding-left: 5px;
}
.para-top {
    grid-template-columns: 20px 8px 24px 6px 8px 18px 22px 4px 22px 6px 8px 20px 8px 22px;
}
.para-bottom {
    grid-template-columns: 22px 18px 22px 18px 20px 12px 12px 16px 2px 22px 8px 22px 8px;
    padding-left: 2px;
}
.on {
    width: 20px;
    height: 21px;
    padding: 5px 4px;
    background: #c3d1e8;
}
.styles {
    width: 276px;
    padding-left: 5px;
    display: flex;
}
.gallery {
    width: 206px;
    height: 52px;
    display: flex;
    background: #fff;
    border: 1px solid #d5d5d5;
    border-right: 0;
}
.style {
    width: 64px;
    display: flex;
    flex-direction: column;
    align-items: center;
    overflow: hidden;
    white-space: nowrap;
}
.style b {
    height: 32px;
    line-height: 34px;
    width: 58px;
    font-weight: normal;
    color: #000;
    overflow: hidden;
}
.style .h3 {
    font-size: 19px;
    font-weight: bold;
    font-family: "Open Sans", sans-serif;
    letter-spacing: -0.2px;
}
.style .normal {
    font-size: 14px;
}
.style .default {
    font-family: "Liberation Serif", serif;
    font-size: 13px;
}
.style.selected {
    border: 2px solid #cbd9f2;
}
.style.selected b {
    height: 30px;
    line-height: 29px;
    width: 60px;
}
.scroller {
    width: 13px;
    display: flex;
    flex-direction: column;
    align-items: center;
    justify-content: space-around;
    background: #dcdcdf;
}
.more {
    width: 6px;
    height: 7px;
    line-height: 0;
    padding-top: 3px;
    border-top: 1px solid #555;
}
.newstyle {
    width: 60px;
}
.tools {
    width: 71px;
    padding-left: 4px;
    border: 0;
}
.tool-icon {
    display: flex;
    font-size: 19px;
    line-height: 22px;
    color: #777;
}
.tool-icon svg {
    margin: 8px -6px 0 -6px;
}
.more-groups {
    width: 13px;
    height: 65px;
    margin-top: 1px;
    display: flex;
    align-items: center;
    justify-content: center;
    background: #b6b9c3;
}

/* quick access and document tabs */
.docbar {
    height: 28px;
    display: flex;
    background: #fafafa;
    border-bottom: 1px solid #bfc2cb;
}
.quick {
    width: 171px;
    padding-left: 5px;
    display: grid;
    grid-template-columns: 17px 24px 17px 25px 16px 25px 1px 19px 21px;
    align-items: center;
    justify-items: center;
}
.doctabs {
    width: 730px;
    display: flex;
}
.doctab {
    flex: 1;
    display: flex;
    align-items: center;
    padding: 1px 8px 0 3px;
    white-space: nowrap;
}
.doctab svg {
    width: 16px;
    height: 16px;
    margin-right: 7px;
}
.doctab span {
    width: 38px;
}
.doctab em {
    width: 6px;
}
.doctab .x {
    width: 9px;
    height: 9px;
    margin: 0 0 0 2px;
}
.doctab.current {
    flex: 0 0 92px;
    background: #e7eff9;
    border-bottom: 2px solid #6f9ddb;
    padding-left: 5px;
    padding-top: 2px;
}
.tabtools {
    width: 94px;
    display: grid;
    grid-template-columns: 18px 27px 26px 23px;
    align-items: center;
    justify-items: center;
}

/* document */
.workspace {
    height: 818px;
    display: flex;
    background: #bfc2cb;
}
.canvas {
    width: 970px;
    height: 818px;
    padding-left: 89px;
    overflow: hidden;
}
.page {
    position: relative;
    width: 793px;
    background: #fff;
    box-shadow: 0 0 4px rgba(100, 104, 120, 0.7);
}
.page.first {
    height: 238px;
    margin-bottom: 20px;
    overflow: hidden;
}
.page.second {
    height: 600px;
    padding-top: 100px;
}
.text {
    padding-left: 119px;
    font-family: "Noto Sans CJK SC", sans-serif;
    font-size: 14px;
    line-height: 30px;
    color: #2b2b2b;
}
.first .text {
    margin-top: -14px;
}
.line {
    height: 30px;
    white-space: nowrap;
}
.line + .indent {
    margin-top: 10px;
}
.indent {
    padding-left: 28px;
}
.heading {
    margin-top: 10px;
    padding-left: 28px;
    width: 554px;
    text-align: center;
    font-weight: bold;
}
.half {
    display: inline-block;
    width: 7px;
    text-align: center;
    font-family: "Liberation Serif", serif;
}
.crop {
    position: absolute;
    width: 24px;
    height: 24px;
    border: 0 solid #aaa;
}
.bl {
    left: 96px;
    top: 142px;
    border-width: 1px 1px 0 0;
}
.br {
    left: 673px;
    top: 142px;
    border-width: 1px 0 0 1px;
}
.tl {
    left: 96px;
    top: 72px;
    border-width: 0 1px 1px 0;
}
.tr {
    left: 673px;
    top: 72px;
    border-width: 0 0 1px 1px;
}
.scrollbar {
    width: 19px;
    padding: 4px 0;
    display: flex;
    flex-direction: column;
    align-items: center;
    background: #a9a9b3;
}
.to-top {
    margin: 10px 0 89px;
}
.thumb {
    width: 13px;
    height: 28px;
    background: linear-gradient(#888, #888) 3px 9px / 7px 1px no-repeat,
        linear-gradient(#888, #888) 3px 13px / 7px 1px no-repeat,
        linear-gradient(#888, #888) 3px 17px / 7px 1px no-repeat, #d3d3d7;
}
.jump {
    margin-top: auto;
    margin-bottom: 2px;
    height: 64px;
    display: flex;
    flex-direction: column;
    align-items: center;
    justify-content: space-between;
}
.edge {
    width: 7px;
    padding-top: 379px;
    background: #dedee1;
}
.handle {
    height: 101px;
    display: flex;
    align-items: center;
    justify-content: center;
    background: #3c78cc;
}

.status {
    height: 22px;
    padding-left: 8px;
    display: flex;
    align-items: center;
    background: #dedee1;
    white-space: nowrap;
}
.status > span {
    line-height: 12px;
    padding-top: 1px;
}
.s-code { width: 48px; }
.s-page { width: 67px; }
.s-sec { width: 42px; border-right: 1px solid #aaa; }
.status .s-row { width: 44px; padding-left: 4px; }
.s-col { width: 37px; border-right: 1px solid #aaa; }
.status .s-count { width: 77px; padding-left: 7px; border-right: 1px solid #aaa; }
.s-spell {
    width: 67px;
    padding-left: 4px;
    display: flex;
    align-items: center;
    gap: 4px;
    border-right: 1px solid #aaa;
}
.s-spell i {
    width: 7px;
    height: 7px;
    background: #4fae35;
}
.views {
    margin-left: 231px;
    display: grid;
    grid-template-columns: 20px 34px 20px 33px 14px 15px;
    align-items: center;
    justify-items: center;
    height: 22px;
}
.view-on {
    width: 22px;
    height: 22px;
    padding: 5px;
    background: #c3d1e8;
}
.percent {
    width: 42px;
    margin-left: 10px;
    font-size: 12.5px;
}
.zoom {
    display: flex;
    align-items: center;
    gap: 8px;
}
.minus {
    width: 10px;
    height: 2px;
    background: #666;
}
.track {
    width: 134px;
    height: 2px;
    display: flex;
    align-items: center;
    background: #8e8e94;
}
.done {
    width: 61px;
    height: 2px;
    background: #4b8fe4;
}
.knob {
    width: 14px;
    height: 14px;
    background: #f1f1f1;
    border: 1px solid #888;
    border-radius: 50%;
}
.plus {
    width: 10px;
    height: 10px;
    margin-left: -2px;
    background: linear-gradient(#666, #666) 0 4px / 10px 2px no-repeat,
        linear-gradient(#666, #666) 4px 0 / 2px 10px no-repeat;
}
```
